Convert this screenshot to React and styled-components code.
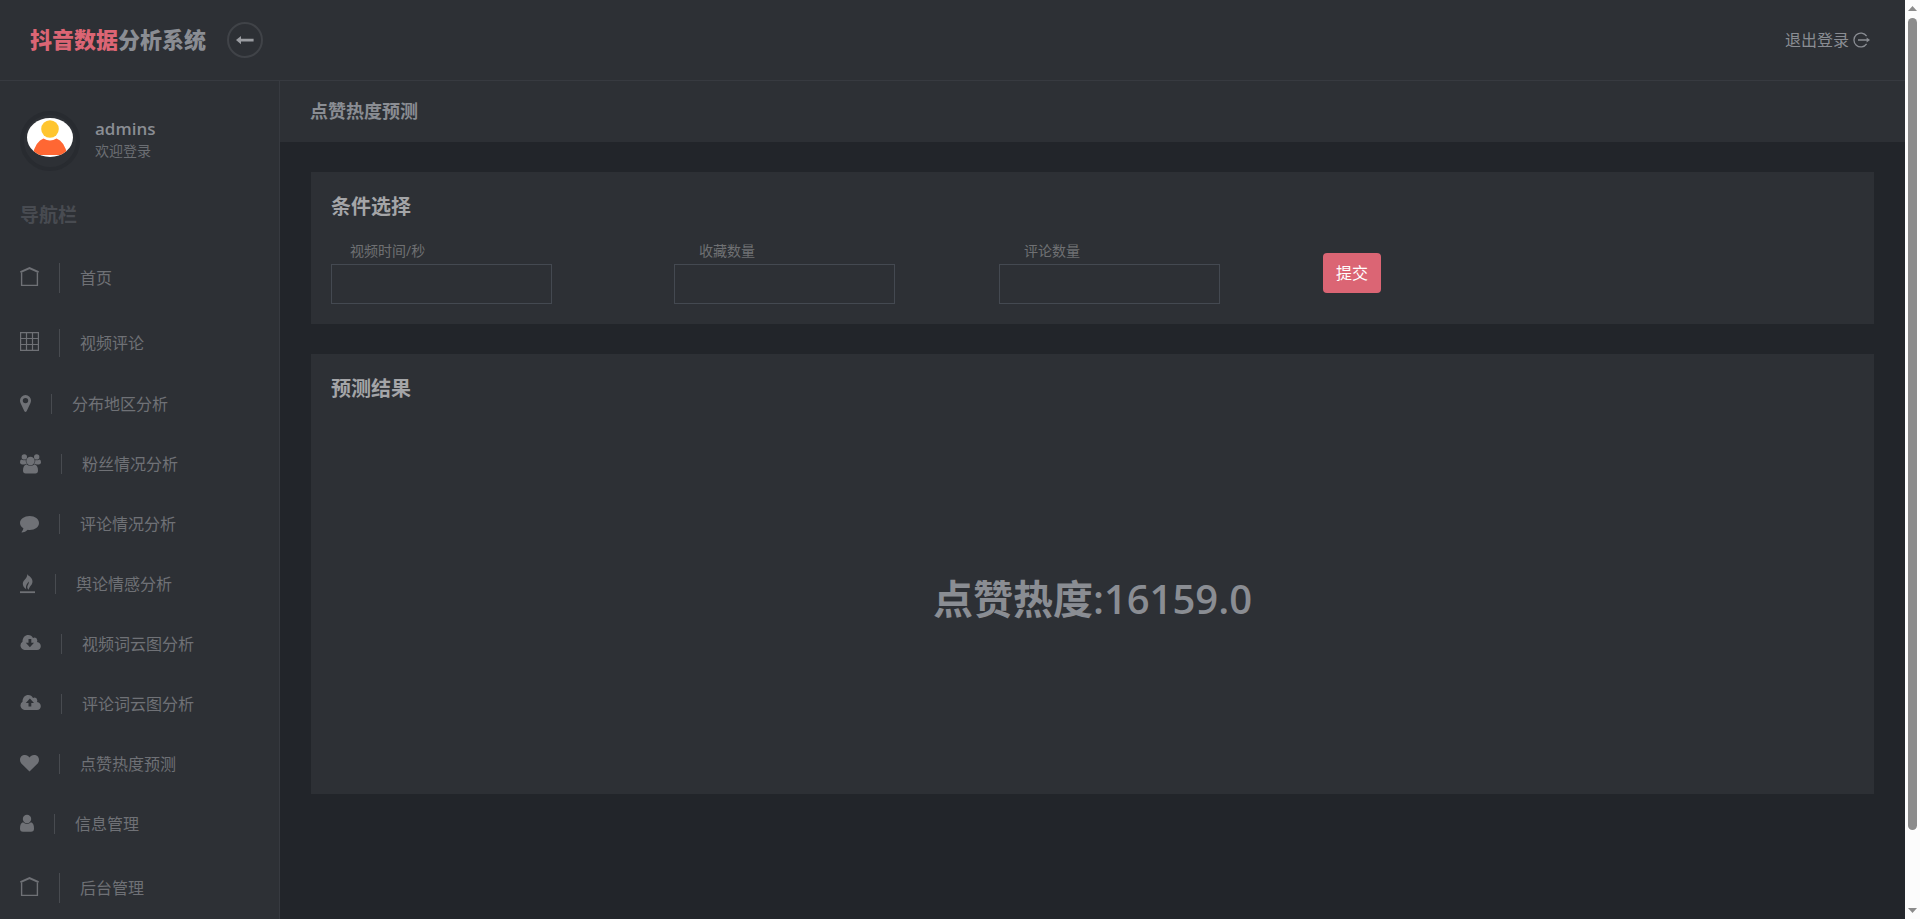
import React, { useState } from "react";
import styled, { createGlobalStyle } from "styled-components";

const HomeIcon = () => (
  <svg width="19" height="26" viewBox="0 0 19 26" fill="none" stroke="currentColor">
    <path d="M0.4 7.2 L9.5 3 L18.6 7.2" strokeWidth="2" />
    <path d="M1.6 7.5 V20.4 H17.4 V7.5" strokeWidth="1.4" />
  </svg>
);

const GridIcon = () => (
  <svg width="19" height="26" viewBox="0 0 19 26" fill="none" stroke="currentColor" strokeWidth="1.2">
    <path d="M0.6 2.6 H18.4 V20.4 H0.6 Z M6.5 2.6 V20.4 M12.5 2.6 V20.4 M0.6 8.5 H18.4 M0.6 14.5 H18.4" />
  </svg>
);

const MarkerIcon = () => (
  <svg width="11" height="20" viewBox="0 0 11 20" fill="currentColor">
    <path
      fillRule="evenodd"
      d="M5.5 1 A5.5 5.5 0 0 1 11 6.6 C11 7.6 10.8 8.4 10.5 9 L6.6 17.2 Q5.5 18.6 4.4 17.2 L0.5 9 C0.2 8.4 0 7.6 0 6.6 A5.5 5.5 0 0 1 5.5 1 Z M5.5 3.9 A2.7 2.7 0 1 0 5.5 9.3 A2.7 2.7 0 1 0 5.5 3.9 Z"
    />
  </svg>
);

const GroupIcon = () => (
  <svg width="21" height="20" viewBox="0 0 21 20" fill="currentColor">
    <circle cx="4.3" cy="2.9" r="2.7" />
    <circle cx="16.7" cy="2.9" r="2.7" />
    <path d="M1.2 5.5 Q2.8 6.5 5.6 6 Q5.6 8.5 7 9.8 Q5.2 10 4.4 10.4 H2 Q0 10.4 0 8.6 Q0 6 1.2 5.5 Z" />
    <path d="M19.8 5.5 Q18.2 6.5 15.4 6 Q15.4 8.5 14 9.8 Q15.8 10 16.6 10.4 H19 Q21 10.4 21 8.6 Q21 6 19.8 5.5 Z" />
    <circle cx="10.5" cy="7" r="4.2" />
    <path d="M6.3 10.2 Q10.5 13.2 14.7 10.2 Q18 11.5 18 16.5 Q18 19.5 15.3 19.5 H5.7 Q3 19.5 3 16.5 Q3 11.5 6.3 10.2 Z" />
  </svg>
);

const CommentIcon = () => (
  <svg width="19" height="20" viewBox="0 0 19 20" fill="currentColor">
    <path d="M9.7 2 C15 2 19 4.9 19 9 C19 13 15 15.9 9.7 15.9 Q8.8 15.9 7.8 15.7 Q5.3 18 2 18.6 Q1.3 18.6 1.6 18 Q3.2 16.4 3.4 14.2 C1.3 12.9 0 11.1 0 9 C0 4.9 4.5 2 9.7 2 Z" />
  </svg>
);

const FireIcon = () => (
  <svg width="15" height="20" viewBox="0 0 15 20" fill="currentColor">
    <path d="M7.2 0 C8 2 12.5 3.2 12.5 7.4 C12.5 11.4 8.8 12.2 8.8 15.8 C7 14.6 6.8 12.4 8.2 10.4 C9 9 8.8 8 8.6 7.4 C7.6 9.4 5.4 11 6.2 15.2 C4 14 2.8 11.8 2.8 9.8 C2.8 5.8 7.6 4.8 7.2 0 Z" />
    <rect x="0" y="17.3" width="15" height="1.8" />
  </svg>
);

const CloudIcon = ({ up }) => (
  <svg width="21" height="20" viewBox="0 0 21 20" fill="currentColor">
    <path
      fillRule="evenodd"
      d={
        "M4.5 16 A4.5 4.5 0 0 1 2.5 7.8 C2.4 3.8 5 1 8.3 1 Q11.6 1 13 4 Q16.7 2.6 17.3 6.2 Q17.4 7 17 8 Q20.8 8.8 20.8 12.2 Q20.6 15.8 17 16 Z " +
        (up
          ? "M9.9 4.6 L14 9 H11.3 V12.6 H8.5 V9 H5.8 Z"
          : "M8.5 5 H11.3 V8.8 H14 L9.9 13.2 L5.8 8.8 H8.5 Z")
      }
    />
  </svg>
);

const HeartIcon = () => (
  <svg width="19" height="20" viewBox="0 0 19 20" fill="currentColor">
    <path d="M9.5 17.6 L1.6 9.8 Q0 8.1 0 5.9 C0 3 2 1 5 1 C7 1 8.4 2.2 9.5 3.5 C10.6 2.2 12 1 14 1 C17 1 19 3 19 5.9 Q19 8.1 17.4 9.8 Z" />
  </svg>
);

const UserIcon = () => (
  <svg width="14" height="20" viewBox="0 0 14 20" fill="currentColor">
    <circle cx="7" cy="5" r="4.2" />
    <path d="M3 8.3 Q7 11.5 11 8.3 Q14 9 14 14.5 Q14 17.8 11 17.8 H3 Q0 17.8 0 14.5 Q0 9 3 8.3 Z" />
  </svg>
);

const ArrowIcon = () => (
  <svg width="18" height="10" viewBox="0 0 18 10" fill="currentColor">
    <path d="M0 5 L5 1 V3.8 H17.6 V6.4 H5 V9.2 Z" />
  </svg>
);

const LogoutIcon = () => (
  <svg width="17" height="16" viewBox="0 0 17 16" fill="none" stroke="currentColor" strokeWidth="1.3">
    <path d="M13.6 4.2 A6.9 6.9 0 1 0 13.6 11.8 M5 8 H15" />
    <path d="M13.6 5.6 L17 8 L13.6 10.4 Z" fill="currentColor" stroke="none" />
  </svg>
);

const AvatarPicture = () => (
  <svg width="46" height="39" viewBox="0 0 46 39">
    <defs>
      <clipPath id="avatar-clip">
        <ellipse cx="23" cy="19.5" rx="23" ry="19.5" />
      </clipPath>
    </defs>
    <g clipPath="url(#avatar-clip)">
      <rect width="46" height="39" fill="#fff" />
      <circle cx="23" cy="11" r="8.8" fill="#ffc52f" />
      <path d="M5.5 37 Q9 23 16.5 20.6 Q23 24.6 29.5 20.6 Q37 23 40.5 37 Z" fill="#ff6733" />
    </g>
  </svg>
);

const navItems = [
  { label: "首页", icon: <HomeIcon />, rule: 30, height: 68 },
  { label: "视频评论", icon: <GridIcon />, rule: 28, height: 62 },
  { label: "分布地区分析", icon: <MarkerIcon /> },
  { label: "粉丝情况分析", icon: <GroupIcon /> },
  { label: "评论情况分析", icon: <CommentIcon /> },
  { label: "舆论情感分析", icon: <FireIcon /> },
  { label: "视频词云图分析", icon: <CloudIcon /> },
  { label: "评论词云图分析", icon: <CloudIcon up /> },
  { label: "点赞热度预测", icon: <HeartIcon /> },
  { label: "信息管理", icon: <UserIcon /> },
  { label: "后台管理", icon: <HomeIcon />, rule: 30, height: 68 },
];

const App = () => {
  const [form, setForm] = useState({ duration: "", collect: "", comment: "" });
  const handleChange = (e) => {
    setForm({ ...form, [e.target.name]: e.target.value });
  };

  return (
    <>
      <GlobalStyle />
      <Shell>
        <Viewport>
          <Header>
            <Brand href="#">
              <BrandAccent>抖音数据</BrandAccent>分析系统
            </Brand>
            <ToggleButton type="button" aria-label="收起导航">
              <ArrowIcon />
            </ToggleButton>
            <LogoutLink href="#">
              退出登录
              <LogoutIcon />
            </LogoutLink>
          </Header>
          <Body>
            <Sidebar>
              <Profile>
                <Avatar>
                  <AvatarPicture />
                </Avatar>
                <ProfileText>
                  <UserName>admins</UserName>
                  <Welcome>欢迎登录</Welcome>
                </ProfileText>
              </Profile>
              <NavHeading>导航栏</NavHeading>
              <NavList>
                {navItems.map((item) => (
                  <li key={item.label}>
                    <NavLink href="#" $height={item.height || 60}>
                      {item.icon}
                      <NavRule $size={item.rule || 20} />
                      {item.label}
                    </NavLink>
                  </li>
                ))}
              </NavList>
            </Sidebar>
            <Main>
              <PageHeader>
                <PageTitle>点赞热度预测</PageTitle>
              </PageHeader>
              <Cards>
                <Card>
                  <CardTitle>条件选择</CardTitle>
                  <Form onSubmit={(e) => e.preventDefault()}>
                    <Field $indent={19}>
                      <label htmlFor="duration">视频时间/秒</label>
                      <Input id="duration" name="duration" value={form.duration} onChange={handleChange} />
                    </Field>
                    <Field $indent={25}>
                      <label htmlFor="collect">收藏数量</label>
                      <Input id="collect" name="collect" value={form.collect} onChange={handleChange} />
                    </Field>
                    <Field $indent={25}>
                      <label htmlFor="comment">评论数量</label>
                      <Input id="comment" name="comment" value={form.comment} onChange={handleChange} />
                    </Field>
                    <SubmitButton type="submit">提交</SubmitButton>
                  </Form>
                </Card>
                <Card>
                  <CardTitle>预测结果</CardTitle>
                  <Result>点赞热度:16159.0</Result>
                </Card>
              </Cards>
            </Main>
          </Body>
        </Viewport>
        <ScrollTrack aria-hidden="true">
          <ScrollArrow viewBox="0 0 9 5">
            <path d="M4.5 0 L9 5 H0 Z" />
          </ScrollArrow>
          <ScrollLane>
            <ScrollThumb />
          </ScrollLane>
          <ScrollArrow viewBox="0 0 9 5">
            <path d="M0 0 H9 L4.5 5 Z" />
          </ScrollArrow>
        </ScrollTrack>
      </Shell>
    </>
  );
};
export default App;

const GlobalStyle = createGlobalStyle`
  * {
    box-sizing: border-box;
  }
  body {
    margin: 0;
    background: #22252a;
    color: #8a8d93;
    font-family: "Open Sans", "Noto Sans CJK SC", sans-serif;
    font-size: 16px;
    line-height: 24px;
  }
  a {
    color: inherit;
    text-decoration: none;
  }
  h1, h2, p, ul {
    margin: 0;
    padding: 0;
  }
  svg {
    display: block;
    flex-shrink: 0;
  }
`;

const Shell = styled.div`
  display: flex;
  height: 100vh;
`;
const Viewport = styled.div`
  display: flex;
  flex-direction: column;
  flex: 1;
  min-width: 0;
  overflow-y: auto;
  scrollbar-width: none;
`;
const Header = styled.header`
  display: flex;
  align-items: center;
  flex-shrink: 0;
  height: 81px;
  padding: 0 35px 0 30px;
  background: #2d3035;
  border-bottom: 1px solid #373a40;
`;
const Brand = styled.a`
  margin-right: 21px;
  padding-bottom: 2px;
  font-size: 22px;
  font-weight: 900;
`;
const BrandAccent = styled.span`
  color: #db6574;
`;
const ToggleButton = styled.button`
  display: flex;
  align-items: center;
  justify-content: center;
  width: 36px;
  height: 36px;
  padding: 0;
  border: 2px solid #404348;
  border-radius: 50%;
  background: transparent;
  color: #9a9ca1;
  cursor: pointer;
`;
const LogoutLink = styled.a`
  display: flex;
  align-items: center;
  gap: 4px;
  margin-left: auto;
`;
const Body = styled.div`
  display: flex;
  flex: 1 0 auto;
`;
const Sidebar = styled.nav`
  flex: 0 0 280px;
  padding-bottom: 90px;
  background: #2d3035;
  border-right: 1px solid #373a40;
`;
const Profile = styled.div`
  display: flex;
  align-items: center;
  gap: 15px;
  padding: 30px 20px;
`;
const Avatar = styled.div`
  width: 60px;
  height: 60px;
  padding: 3px;
  border: 4px solid #282b30;
  border-radius: 50%;
`;
const ProfileText = styled.div`
  padding-bottom: 3px;
`;
const UserName = styled.h1`
  font-size: 17px;
  font-weight: 600;
  line-height: 22px;
`;
const Welcome = styled.p`
  color: #6b6e73;
  font-size: 14px;
  line-height: 22px;
`;
const NavHeading = styled.h2`
  margin-bottom: 15px;
  padding-left: 20px;
  color: #484b51;
  font-size: 19px;
  font-weight: 700;
  line-height: 28px;
`;
const NavList = styled.ul`
  list-style: none;
`;
const NavLink = styled.a`
  display: flex;
  align-items: center;
  gap: 20px;
  height: ${(props) => props.$height}px;
  padding: 0 20px;
  color: #6f7176;
`;
const NavRule = styled.span`
  width: 1px;
  height: ${(props) => props.$size}px;
  background: #484b50;
`;
const Main = styled.main`
  flex: 1;
  min-width: 0;
`;
const PageHeader = styled.div`
  padding: 18px 30px;
  background: #2d3035;
`;
const PageTitle = styled.h2`
  font-size: 18px;
  font-weight: 700;
  line-height: 25px;
`;
const Cards = styled.div`
  display: flex;
  flex-direction: column;
  gap: 30px;
  padding: 30px 31px;
`;
const Card = styled.section`
  padding: 20px;
  background: #2d3035;
`;
const CardTitle = styled.h2`
  margin-bottom: 20px;
  color: #a4a5a8;
  font-size: 20px;
  font-weight: 700;
  line-height: 30px;
`;
const Form = styled.form`
  display: grid;
  grid-template-columns: 343px 325px 324px auto;
  justify-content: start;
  align-items: center;
`;
const Field = styled.div`
  label {
    display: block;
    height: 22px;
    padding-left: ${(props) => props.$indent}px;
    color: #6f7073;
    font-size: 14px;
    line-height: 18px;
  }
`;
const Input = styled.input`
  display: block;
  width: 221px;
  height: 40px;
  padding: 0 12px;
  border: 1px solid #444951;
  background: transparent;
  color: #8a8d93;
  font: inherit;
  outline: none;
`;
const SubmitButton = styled.button`
  height: 40px;
  padding: 0 13px;
  border: 0;
  border-radius: 4px;
  background: #db6574;
  color: #fff;
  font: inherit;
  cursor: pointer;
`;
const Result = styled.p`
  padding: 145px 0;
  font-size: 40px;
  font-weight: 600;
  line-height: 60px;
  text-align: center;
`;
const ScrollTrack = styled.div`
  display: flex;
  flex-direction: column;
  align-items: center;
  flex: 0 0 15px;
  padding: 6px 0;
  background: #fcfcfc;
`;
const ScrollArrow = styled.svg`
  width: 9px;
  height: 5px;
  fill: #8b8b8b;
`;
const ScrollLane = styled.div`
  flex: 1;
  width: 9px;
  padding: 7px 0;
`;
const ScrollThumb = styled.div`
  height: 92%;
  border-radius: 5px;
  background: #8b8b8b;
`;
